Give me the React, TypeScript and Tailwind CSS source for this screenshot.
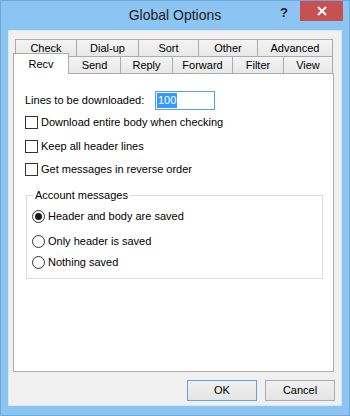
import React from 'react';

const topTabs = [
  { label: 'Check', w: 'w-[61px]' },
  { label: 'Dial-up', w: 'w-[62px]' },
  { label: 'Sort', w: 'w-[60px]' },
  { label: 'Other', w: 'w-[59px]' },
  { label: 'Advanced', w: 'w-[76px]' },
];

const bottomTabs = [
  { label: 'Send', w: 'w-[51px]' },
  { label: 'Reply', w: 'w-[52px]' },
  { label: 'Forward', w: 'w-[60px]' },
  { label: 'Filter', w: 'w-[51px]' },
  { label: 'View', w: 'w-[50px]' },
];

const CheckBox: React.FC<{ label: string; className?: string }> = ({ label, className }) => (
  <div className={`flex items-center h-[16px] ${className ?? ''}`}>
    <span className="w-[13px] h-[13px] border border-[#333333] bg-white shrink-0" />
    <span className="ml-[3px]">{label}</span>
  </div>
);

const Radio: React.FC<{ label: string; checked?: boolean; className?: string }> = ({ label, checked, className }) => (
  <div className={`flex items-center h-[16px] ${className ?? ''}`}>
    <span className="w-[13px] h-[13px] rounded-full border border-[#333333] bg-white shrink-0 flex items-center justify-center">
      {checked && <span className="w-[7px] h-[7px] rounded-full bg-[#1a1a1a]" />}
    </span>
    <span className="ml-[3px]">{label}</span>
  </div>
);

export default function App() {
  return (
    <div
      className="w-[350px] h-[416px] bg-[#8cc4f2] border border-[#6fa8dc] flex flex-col px-[7px] pb-[9px] text-[11px] text-black"
      style={{ fontFamily: '"Liberation Sans", Arial, sans-serif' }}
    >
      {/* Title bar */}
      <div className="h-[29px] grid grid-cols-[1fr_auto_1fr]">
        <div />
        <div className="pt-[7px] text-[14px] text-[#1e1e1e] leading-none">Global Options</div>
        <div className="flex justify-end items-start">
          <span className="mt-[5px] mr-[12px] text-[13px] font-bold text-[#222] leading-none">?</span>
          <div className="w-[43px] h-[20px] bg-[#c75050] flex items-center justify-center -mr-[1px]">
            <svg width="10" height="10" viewBox="0 0 10 10">
              <path d="M1 1 L9 9 M9 1 L1 9" stroke="white" strokeWidth="2" />
            </svg>
          </div>
        </div>
      </div>

      {/* Client area */}
      <div className="flex-1 bg-[#f0f0f0] border border-[#d6e8f7] flex flex-col pt-[8px] pl-[4px] pr-[6px] pb-[4px]">
        <div className="w-[321px] flex flex-col">
          {/* Tab row 1 */}
          <div className="h-[17px] flex pl-[2px]">
            {topTabs.map((t, i) => (
              <div
                key={t.label}
                className={`${t.w} h-[17px] border-t border-l border-[#acacac] ${i === topTabs.length - 1 ? 'border-r' : ''} bg-gradient-to-b from-[#f4f4f4] to-[#e8e8e8] flex items-center justify-center leading-none`}
              >
                {t.label}
              </div>
            ))}
          </div>
          {/* Tab row 2 */}
          <div className="h-[17px] flex items-start">
            <div className="w-[56px] h-[21px] -mt-[3px] relative z-10 bg-white border-t border-l border-r border-[#acacac] flex items-start justify-center pt-[5px] leading-none">
              Recv
            </div>
            {bottomTabs.map((t, i) => (
              <div
                key={t.label}
                className={`${t.w} h-[17px] border-t ${i === 0 ? '' : 'border-l'} ${i === bottomTabs.length - 1 ? 'border-r' : ''} border-[#acacac] bg-gradient-to-b from-[#f4f4f4] to-[#e8e8e8] flex items-center justify-center leading-none`}
              >
                {t.label}
              </div>
            ))}
          </div>
          {/* Panel */}
          <div className="h-[299px] bg-white border border-[#acacac] pl-[11px] pt-[17px] flex flex-col">
            <div className="flex items-center h-[19px]">
              <span className="w-[130px]">Lines to be downloaded:</span>
              <div className="w-[60px] h-[19px] border border-[#569de5] flex items-center pl-[1px]">
                <span className="bg-[#3399ff] text-white px-[1px] leading-[15px]">100</span>
              </div>
            </div>
            <CheckBox label="Download entire body when checking" className="mt-[4px]" />
            <CheckBox label="Keep all header lines" className="mt-[8px]" />
            <CheckBox label="Get messages in reverse order" className="mt-[7px]" />

            <div className="relative mt-[18px] ml-[1px] w-[297px] border border-[#dcdcdc] pt-[12px] pl-[5px] pb-[8px]">
              <span className="absolute -top-[8px] left-[6px] bg-white px-[2px] leading-[15px]">Account messages</span>
              <Radio label="Header and body are saved" checked />
              <Radio label="Only header is saved" className="mt-[9px]" />
              <Radio label="Nothing saved" className="mt-[5px]" />
            </div>
          </div>
        </div>

        {/* Buttons */}
        <div className="mt-[8px] flex justify-end gap-[8px]">
          <button className="w-[70px] h-[21px] border border-[#5fa4e0] bg-gradient-to-b from-[#f0f0f0] to-[#e5e5e5] flex items-center justify-center leading-none">
            OK
          </button>
          <button className="w-[70px] h-[21px] border border-[#acacac] bg-gradient-to-b from-[#f0f0f0] to-[#e5e5e5] flex items-center justify-center leading-none">
            Cancel
          </button>
        </div>
      </div>
    </div>
  );
}
